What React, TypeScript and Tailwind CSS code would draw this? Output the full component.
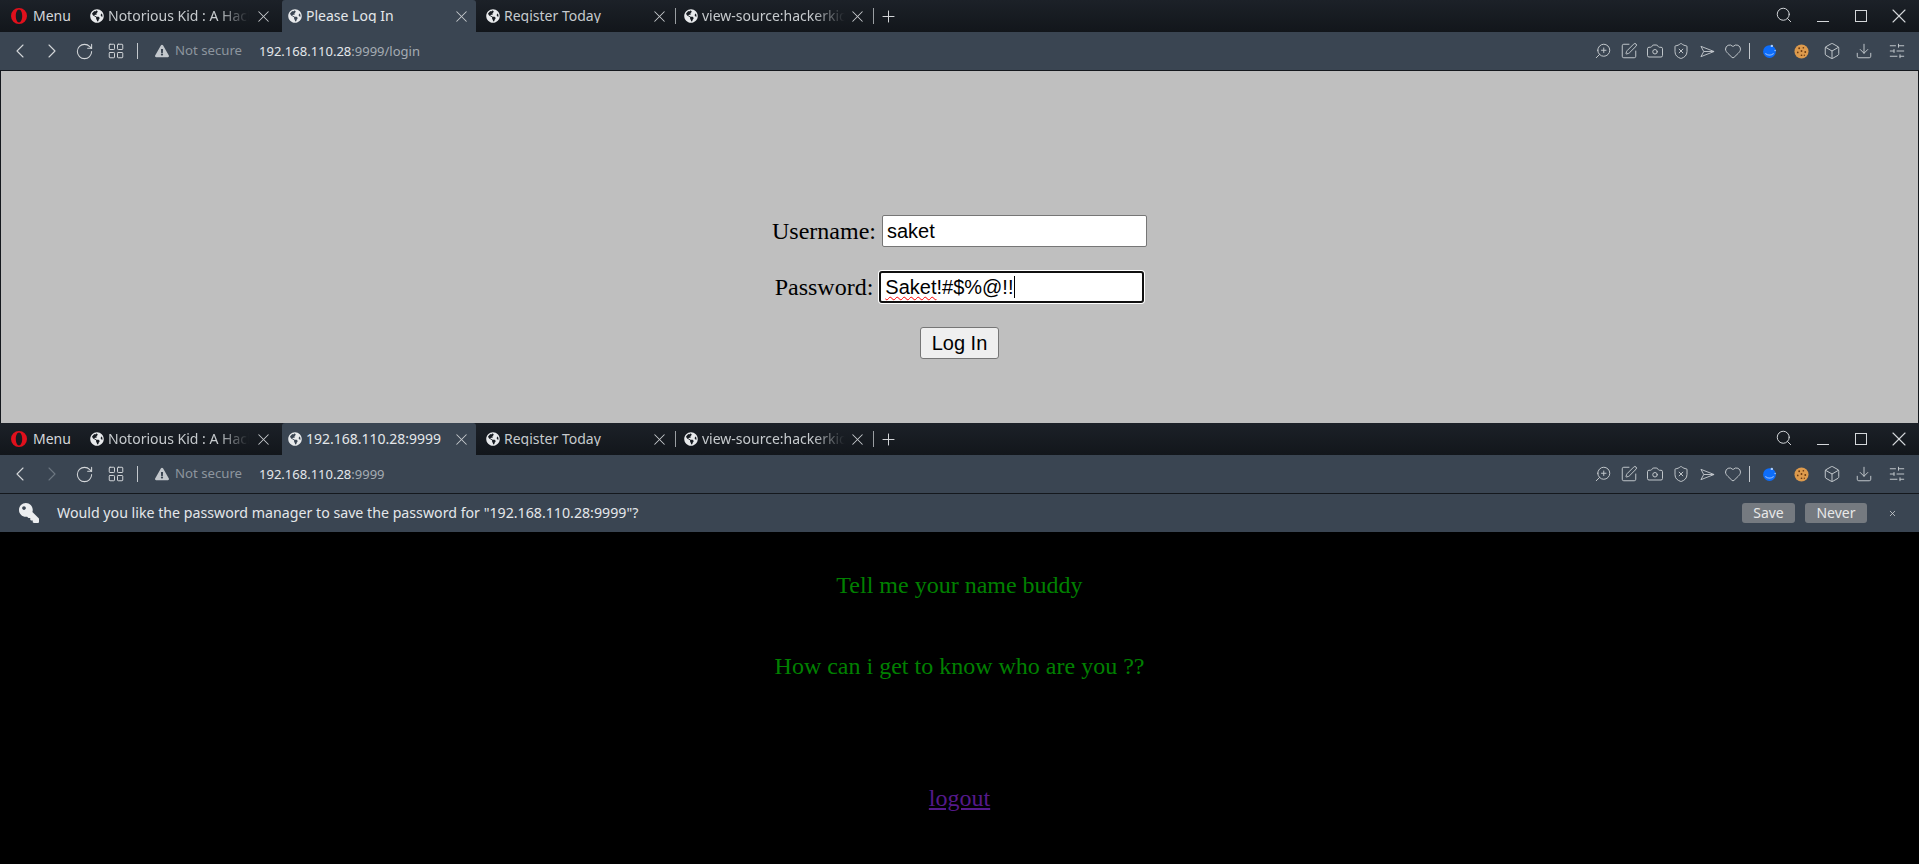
import type { ReactNode } from 'react'
import {
  Box,
  Camera,
  ChevronLeft,
  ChevronRight,
  Download,
  Heart,
  LayoutGrid,
  Plus,
  RotateCw,
  Search,
  ShieldX,
  SlidersHorizontal,
  SquarePen,
  X,
  ZoomIn,
} from 'lucide-react'
import { FaExclamationTriangle, FaGlobeAmericas, FaKey } from 'react-icons/fa'

type Tab = {
  title: string
  box: string
  close: string
  active?: boolean
  fade?: boolean
  separator?: boolean
}

function OperaLogo() {
  return (
    <svg viewBox="0 0 16 16" className="size-4 shrink-0">
      <path
        fillRule="evenodd"
        fill="#e0101c"
        d="M8 0a8 8 0 1 0 0 16A8 8 0 0 0 8 0Zm0 1.6c1.9 0 3.2 2.9 3.2 6.4S9.9 14.4 8 14.4 4.8 11.5 4.8 8 6.1 1.6 8 1.6Z"
      />
    </svg>
  )
}

function SendIcon() {
  return (
    <svg viewBox="0 0 16 16" className="size-[15px]" fill="none" stroke="#c3c8cd" strokeWidth="1">
      <path d="M1 2.5 L15 8 L1 13.5 L4 8 Z M4 8 H15" strokeLinejoin="round" />
    </svg>
  )
}

function BlueBadge() {
  return (
    <svg viewBox="0 0 16 16" className="size-[15px]">
      <circle cx="8" cy="8" r="6.8" fill="#0d6dfb" />
      <path d="M3.5 10 C6 12.5 10 12.5 12.5 10" fill="none" stroke="#7fb2ff" strokeWidth="1.2" />
      <circle cx="10.5" cy="2" r="1.3" fill="#a8ccff" />
      <circle cx="14" cy="7" r="0.8" fill="#a8ccff" />
    </svg>
  )
}

function CookieIcon() {
  return (
    <svg viewBox="0 0 16 16" className="size-[15px]">
      <circle cx="8" cy="8" r="7.5" fill="#dd9a4c" />
      <circle cx="5.5" cy="4.5" r="1" fill="#6b3a12" />
      <circle cx="10" cy="4" r="0.9" fill="#6b3a12" />
      <circle cx="8" cy="7.5" r="1" fill="#6b3a12" />
      <circle cx="4" cy="9" r="0.9" fill="#6b3a12" />
      <circle cx="12" cy="8.5" r="1" fill="#6b3a12" />
      <circle cx="8" cy="12" r="0.9" fill="#6b3a12" />
      <circle cx="11" cy="12" r="0.7" fill="#6b3a12" />
    </svg>
  )
}

function TabItem({ tab }: { tab: Tab }) {
  return (
    <div className={`flex h-8 shrink-0 items-center ${tab.box} ${tab.active ? 'rounded-t-[3px] bg-[#3a4552] text-[#e4e7ea]' : 'text-[#c6cacd]'}`}>
      <FaGlobeAmericas className="size-[14px] shrink-0 text-[#e8eaec]" />
      <span
        className={`ml-1 min-w-0 flex-1 overflow-hidden whitespace-nowrap ${tab.fade ? '[mask-image:linear-gradient(to_right,black_78%,transparent_100%)]' : ''}`}
      >
        {tab.title}
      </span>
      <X className={`size-[19px] shrink-0 text-[#c6cacd] ${tab.close}`} strokeWidth={1.3} />
      {tab.separator && <div className="h-4 w-px shrink-0 bg-[#9a9ea2]" />}
    </div>
  )
}

function ToolSlot({ children }: { children: ReactNode }) {
  return <div className="flex w-[26px] shrink-0 justify-center">{children}</div>
}

function BrowserChrome({
  tabs,
  url,
  path,
  forwardDisabled,
}: {
  tabs: Tab[]
  url: string
  path: string
  forwardDisabled?: boolean
}) {
  const toolIcon = 'size-[18px] text-[#c3c8cd]'

  return (
    <div className="shrink-0 font-['Noto_Sans',sans-serif] text-[13px] leading-none">
      {/* tab bar */}
      <div className="flex h-8 items-center bg-linear-to-b from-[#1c2128] to-[#12161b] text-[14px]">
        <div className="flex w-[84px] shrink-0 items-center gap-1.5 pl-[11px] text-[#d4d7da]">
          <OperaLogo />
          <span>Menu</span>
        </div>
        {tabs.map((tab) => (
          <TabItem key={tab.title} tab={tab} />
        ))}
        <Plus className="ml-[5px] size-[19px] text-[#d4d7da]" strokeWidth={1.25} />
        <div className="flex-1" />
        <Search className="-mt-[2px] size-[18px] text-[#d4d7da]" strokeWidth={1.3} />
        <div className="ml-[24px] mt-[10px] h-px w-3 bg-[#d4d7da]" />
        <div className="ml-[26px] -mt-[1px] size-3 border border-[#d4d7da]" />
        <X className="ml-[20px] mr-[8px] size-6 text-[#d4d7da]" strokeWidth={1.1} />
      </div>

      {/* toolbar */}
      <div className="flex h-[38px] items-center bg-[#3a4552] text-[#c3c8cd]">
        <ChevronLeft className="ml-[8px] size-6 text-[#d4d7da]" strokeWidth={1.1} />
        <ChevronRight className={`ml-[8px] size-6 ${forwardDisabled ? 'text-[#6d7782]' : 'text-[#d4d7da]'}`} strokeWidth={1.1} />
        <RotateCw className="ml-[11px] size-[19px] text-[#d4d7da]" strokeWidth={1.3} />
        <LayoutGrid className="ml-[13px] size-[18px] text-[#d4d7da]" strokeWidth={1.3} />
        <div className="ml-[12px] h-4 w-px bg-[#c3c8cd]" />
        <FaExclamationTriangle className="ml-[17px] size-[14px] text-[#c3c8cd]" />
        <span className="ml-[6px] text-[13.2px] text-[#8d959e]">Not secure</span>
        <span className="ml-[17px] text-[#e4e7ea]">
          {url}
          <span className="text-[#a5acb3]">{path}</span>
        </span>
        <div className="flex-1" />
        <ToolSlot><ZoomIn className={`${toolIcon} -scale-x-100`} strokeWidth={1.3} /></ToolSlot>
        <ToolSlot><SquarePen className={toolIcon} strokeWidth={1.3} /></ToolSlot>
        <ToolSlot><Camera className={toolIcon} strokeWidth={1.3} /></ToolSlot>
        <ToolSlot><ShieldX className={toolIcon} strokeWidth={1.3} /></ToolSlot>
        <ToolSlot><SendIcon /></ToolSlot>
        <ToolSlot><Heart className={toolIcon} strokeWidth={1.3} /></ToolSlot>
        <div className="ml-[3px] h-4 w-px bg-[#c3c8cd]" />
        <div className="ml-[12px]"><BlueBadge /></div>
        <div className="ml-[17px]"><CookieIcon /></div>
        <Box className={`ml-[14px] ${toolIcon}`} strokeWidth={1.3} />
        <Download className={`ml-[14px] ${toolIcon}`} strokeWidth={1.3} />
        <SlidersHorizontal className={`ml-[15px] mr-[13px] ${toolIcon}`} strokeWidth={1.3} />
      </div>
      <div className="h-px bg-[#14181d]" />
    </div>
  )
}

function FormRow({ children }: { children: ReactNode }) {
  return <div className="flex h-8 items-center justify-center gap-[6px]">{children}</div>
}

function LoginPage() {
  return (
    <div className="flex h-[352px] flex-col items-center gap-6 border-x border-[#14181d] bg-[#bfbfbf] pt-[144px] font-['Liberation_Serif',serif] text-2xl text-black">
      <FormRow>
        <label>Username:</label>
        <input
          readOnly
          value="saket"
          className="h-8 w-[265px] rounded-[2px] border border-[#767676] bg-white px-[4px] font-['Liberation_Sans',sans-serif] text-xl text-black outline-none"
        />
      </FormRow>
      <FormRow>
        <label>Password:</label>
        <div className="flex h-8 w-[265px] items-center rounded-[3px] bg-white pl-[6px] font-['Liberation_Sans',sans-serif] text-xl outline-2 -outline-offset-2 outline-[#101010] ring-1 ring-white">
          <span className="underline decoration-[#ff0000] decoration-wavy decoration-1 underline-offset-[2px] [text-decoration-skip-ink:none]">Saket</span>
          <span>!#$%@!!</span>
          <span className="h-[22px] w-px bg-black" />
        </div>
      </FormRow>
      <button className="h-8 w-[79px] rounded-[3px] border border-[#767676] bg-[#efefef] font-['Liberation_Sans',sans-serif] text-xl text-black">
        Log In
      </button>
    </div>
  )
}

function SavePasswordBar() {
  return (
    <div className="flex h-[38px] shrink-0 items-center bg-[#3a4552] font-['Noto_Sans',sans-serif] text-[14.2px] leading-none text-[#e4e7ea]">
      <FaKey className="ml-[19px] size-[20px] -scale-x-100 text-[#eceef0]" />
      <span className="ml-[18px]">Would you like the password manager to save the password for "192.168.110.28:9999"?</span>
      <div className="flex-1" />
      <button className="h-5 w-[53px] rounded-[3px] bg-[#757a80] text-[14px] text-[#e8e8e8]">Save</button>
      <button className="ml-[10px] h-5 w-[62px] rounded-[3px] bg-[#757a80] text-[14px] text-[#e8e8e8]">Never</button>
      <X className="ml-[21px] mr-[22px] size-[9px] text-[#d4d7da]" strokeWidth={2} />
    </div>
  )
}

function NamePage() {
  return (
    <div className="flex h-[332px] flex-col items-center bg-black pt-[39px] font-['Liberation_Serif',serif] text-2xl leading-[28px] text-[#008000]">
      <p>Tell me your name buddy</p>
      <p className="mt-[53px]">How can i get to know who are you ??</p>
      <a href="#" className="mt-[104px] text-[#551a8b] underline">
        logout
      </a>
    </div>
  )
}

const hackerTab: Tab = { title: 'Notorious Kid : A Hacker', box: 'w-[198px] pl-[6px]', close: 'ml-[5px] mr-[9px]', fade: true }
const registerTab: Tab = { title: 'Register Today', box: 'w-[200px] pl-[10px]', close: 'mr-[6px]', separator: true }
const sourceTab: Tab = { title: 'view-source:hackerkid.blackhat', box: 'w-[198px] pl-[8px]', close: 'ml-[3px] mr-[6px]', fade: true, separator: true }
const activeBox = { box: 'w-[194px] pl-[6px]', close: 'mr-[5px]', active: true }

export default function App() {
  return (
    <div className="flex h-[864px] w-full flex-col overflow-hidden bg-black">
      <BrowserChrome
        url="192.168.110.28"
        path=":9999/login"
        tabs={[hackerTab, { title: 'Please Log In', ...activeBox }, registerTab, sourceTab]}
      />
      <LoginPage />
      <BrowserChrome
        url="192.168.110.28"
        path=":9999"
        forwardDisabled
        tabs={[hackerTab, { title: '192.168.110.28:9999', ...activeBox }, registerTab, sourceTab]}
      />
      <SavePasswordBar />
      <NamePage />
    </div>
  )
}
